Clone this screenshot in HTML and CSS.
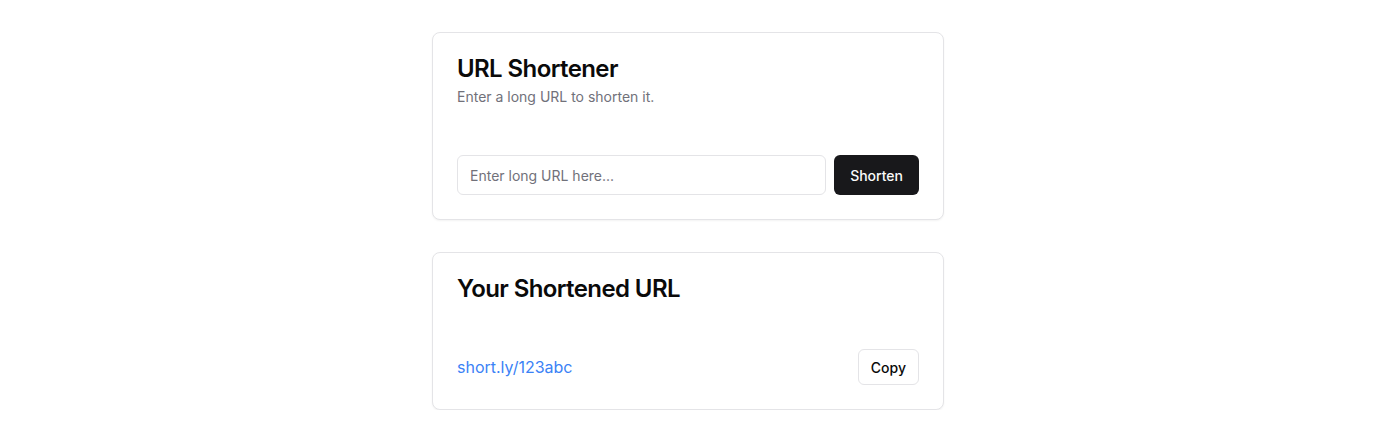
FILE: index.html
```html
<!DOCTYPE html>
<html lang="en">
<head>
<meta charset="utf-8">
<title>URL Shortener</title>
<link rel="stylesheet" href="styles.css">
</head>
<body>
<main class="page">
  <section class="card">
    <div class="card-header">
      <h1 class="card-title">URL Shortener</h1>
      <p class="card-desc">Enter a long URL to shorten it.</p>
    </div>
    <div class="card-content">
      <form class="row">
        <input class="input" type="text" placeholder="Enter long URL here...">
        <button class="btn btn-primary" type="button">Shorten</button>
      </form>
    </div>
  </section>
  <section class="card">
    <div class="card-header">
      <h2 class="card-title">Your Shortened URL</h2>
    </div>
    <div class="card-content">
      <div class="row between">
        <a class="link" href="#">short.ly/123abc</a>
        <button class="btn btn-outline" type="button">Copy</button>
      </div>
    </div>
  </section>
</main>
</body>
</html>
```
FILE: styles.css
```css
* { box-sizing: border-box; }
html, body { margin: 0; padding: 0; background: #ffffff; }
body {
  font-family: Inter, "Noto Sans", sans-serif;
  color: #0a0a0a;
}
.page {
  display: flex;
  flex-direction: column;
  align-items: center;
  gap: 32px;
  padding-top: 32px;
}
.card {
  width: 512px;
  border: 1px solid #e4e4e7;
  border-radius: 8px;
  background: #fff;
  box-shadow: 0 1px 2px rgba(0,0,0,0.05);
}
.card-header {
  padding: 24px;
  display: flex;
  flex-direction: column;
  gap: 6px;
}
.card-title {
  margin: 0;
  font-size: 24px;
  line-height: 24px;
  font-weight: 600;
  letter-spacing: -0.6px;
  color: #0a0a0a;
}
.card-desc {
  margin: 0;
  font-size: 14px;
  line-height: 20px;
  color: #71717a;
}
.card-content { padding: 24px; }
.row {
  display: flex;
  align-items: center;
  gap: 8px;
  margin: 0;
}
.between { justify-content: space-between; }
.input {
  flex: 1;
  height: 40px;
  border: 1px solid #e4e4e7;
  border-radius: 6px;
  padding: 8px 12px;
  font-family: inherit;
  font-size: 14px;
  color: #0a0a0a;
  background: #fff;
  outline: none;
}
.input::placeholder { color: #71717a; }
.btn {
  font-family: inherit;
  font-size: 14px;
  font-weight: 500;
  border-radius: 6px;
  cursor: pointer;
  display: inline-flex;
  align-items: center;
  justify-content: center;
}
.btn-primary {
  height: 40px;
  padding: 0 16px;
  background: #18181b;
  color: #fafafa;
  border: none;
}
.btn-outline {
  height: 36px;
  padding: 0 12px;
  background: #fff;
  color: #0a0a0a;
  border: 1px solid #e4e4e7;
}
.link {
  color: #3b82f6;
  text-decoration: none;
  font-size: 16px;
  line-height: 24px;
}
```
